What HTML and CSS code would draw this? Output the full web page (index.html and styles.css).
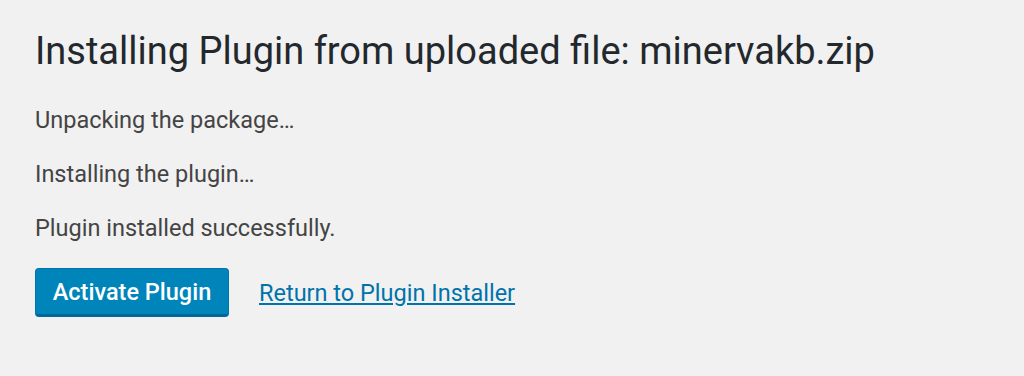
FILE: index.html
```html
<!DOCTYPE html>
<html>
<head>
<meta charset="utf-8">
<link rel="stylesheet" href="styles.css">
</head>
<body>
<div class="wrap">
  <h1 class="title">Installing Plugin from uploaded file: minervakb.zip</h1>
  <p class="msg">Unpacking the package…</p>
  <p class="msg">Installing the plugin…</p>
  <p class="msg">Plugin installed successfully.</p>
  <div class="actions">
    <a class="button-primary" href="#">Activate Plugin</a>
    <a class="link" href="#">Return to Plugin Installer</a>
  </div>
</div>
</body>
</html>
```

FILE: styles.css
```css
html, body {
  margin: 0;
  padding: 0;
  background: #f1f1f1;
}
body {
  font-family: Roboto, "Liberation Sans", sans-serif;
  color: #444;
  width: 1024px;
  height: 376px;
  overflow: hidden;
}
.wrap {
  padding: 27px 0 0 35px;
}
.title {
  margin: 0;
  font-size: 38px;
  font-weight: 400;
  line-height: 48px;
  color: #23282d;
}
.msg {
  margin: 24px 0 0 0;
  font-size: 23.5px;
  line-height: 30px;
}
.title + .msg {
  margin-top: 30px;
}
.actions {
  margin-top: 25px;
  display: flex;
  align-items: center;
  gap: 30px;
}
.button-primary {
  display: inline-block;
  box-sizing: border-box;
  width: 194px;
  height: 49px;
  padding-top: 1px;
  background: #0085ba;
  border: 1px solid #0073aa;
  border-bottom: 3px solid #006799;
  border-radius: 4px;
  color: #fff;
  font-size: 23.5px;
  font-weight: 500;
  text-decoration: none;
  text-align: center;
  line-height: 44px;
}
.link {
  color: #0073aa;
  font-size: 23.5px;
  text-decoration: underline;
}
```
